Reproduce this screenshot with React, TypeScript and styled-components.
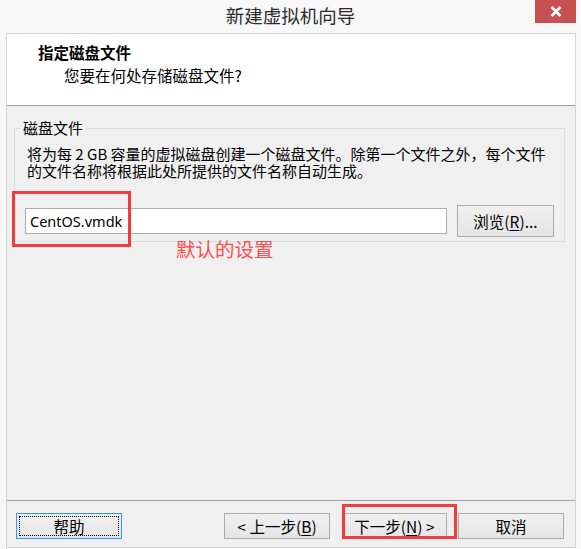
import React from 'react'
import styled, { createGlobalStyle } from 'styled-components'

const GlobalStyle = createGlobalStyle`
  html, body {
    margin: 0;
    padding: 0;
    background: #f8f8f8;
  }
  body {
    font-family: "Noto Sans", "Noto Sans CJK SC", sans-serif;
    color: #000;
  }
`

const CJK = `"Noto Sans CJK SC", "Noto Sans", sans-serif`

/**
 * The "new virtual machine" wizard, disk file step.
 */
export default function App() {
  return (
    <>
      <GlobalStyle />
      <Frame>
        <TitleBar>
          <Title>新建虚拟机向导</Title>
          <CloseButton aria-label="关闭">
            <svg width="12" height="11" viewBox="0 0 12 11">
              <path d="M1.5 1 L10.5 10 M10.5 1 L1.5 10" stroke="#fff" strokeWidth="2.6" />
            </svg>
          </CloseButton>
        </TitleBar>

        <Client>
          <Header>
            <HeaderTitle>指定磁盘文件</HeaderTitle>
            <HeaderSub>您要在何处存储磁盘文件?</HeaderSub>
          </Header>

          <Body>
            <Group>
              <Legend>磁盘文件</Legend>
              <Description>
                <Line>将为每 2 GB 容量的虚拟磁盘创建一个磁盘文件。除第一个文件之外，每个文件</Line>
                <Line>的文件名称将根据此处所提供的文件名称自动生成。</Line>
              </Description>
              <FileRow>
                <FileInput defaultValue="CentOS.vmdk" readOnly />
                <BrowseButton>
                  浏览(<u>R</u>)...
                </BrowseButton>
              </FileRow>
            </Group>

            <Highlight $left={5} $top={85} $width={119} $height={56} />
            <Note>默认的设置</Note>
          </Body>

          <Footer>
            <Button $focused $width={106}>帮助</Button>
            <Spacer />
            <Button $width={106}>
              &lt; 上一步(<u>B</u>)
            </Button>
            <Button $width={105} $gap={12}>
              下一步(<u>N</u>) &gt;
            </Button>
            <Button $width={106} $gap={11}>取消</Button>

            <Highlight $left={335} $top={3} $width={115} $height={35} />
          </Footer>
        </Client>
      </Frame>
    </>
  )
}

const Frame = styled.div`
  width: 581px;
  height: 549px;
  background: #f8f8f8;
  display: flex;
  flex-direction: column;
  overflow: hidden;
`

const TitleBar = styled.div`
  height: 33px;
  flex: none;
  display: grid;
  grid-template-columns: 1fr auto 1fr;
  align-items: start;
`

const Title = styled.div`
  grid-column: 2;
  font-family: ${CJK};
  font-size: 18.5px;
  line-height: 31px;
  color: #2b2b2b;
`

const CloseButton = styled.div`
  grid-column: 3;
  justify-self: end;
  margin-right: 5px;
  width: 41px;
  height: 23px;
  background: #c75050;
  display: flex;
  align-items: center;
  justify-content: center;
`

const Client = styled.div`
  flex: 1;
  margin: 0 5px 1px 6px;
  border: 1px solid #d4d4d4;
  background: #f0f0f0;
  display: flex;
  flex-direction: column;
`

const Header = styled.div`
  height: 72px;
  flex: none;
  box-sizing: border-box;
  background: #fff;
  border-bottom: 1px solid #a0a0a0;
  padding: 8px 0 0 31px;
  font-family: ${CJK};
`

const HeaderTitle = styled.div`
  font-size: 15.5px;
  line-height: 20px;
  font-weight: bold;
`

const HeaderSub = styled.div`
  font-size: 15.5px;
  line-height: 20px;
  margin: 3px 0 0 26px;
`

const Body = styled.div`
  position: relative;
  flex: 1;
  padding: 13px 10px 0 7px;
`

const Group = styled.fieldset`
  margin: 0;
  min-width: 0;
  border: 1px solid #dcdcdc;
  padding: 0 10px 4px 10px;
  font-family: ${CJK};
`

const Legend = styled.legend`
  margin-left: -5px;
  padding: 0 3px;
  font-size: 15px;
  line-height: 18px;
`

const Description = styled.div`
  margin: 8px 0 0 2px;
  font-size: 15px;
  line-height: 17px;
`

const Line = styled.div`
  white-space: nowrap;
`

const FileRow = styled.div`
  margin-top: 26px;
  display: flex;
  align-items: center;
  gap: 10px;
`

const FileInput = styled.input`
  flex: 1;
  min-width: 0;
  height: 26px;
  box-sizing: border-box;
  border: 1px solid #abadb3;
  background: #fff;
  padding: 0 0 0 4px;
  margin: 0;
  font-family: "Noto Sans", sans-serif;
  font-size: 14.5px;
  color: #000;
  outline: none;
`

const ButtonBase = styled.div`
  box-sizing: border-box;
  border: 1px solid #acacac;
  background: linear-gradient(#f0f0f0, #e5e5e5);
  display: flex;
  align-items: center;
  justify-content: center;
  font-family: ${CJK};
  font-size: 15.5px;
  color: #000;
  white-space: nowrap;

  u {
    text-underline-offset: 2px;
  }
`

const BrowseButton = styled(ButtonBase)`
  width: 97px;
  height: 32px;
  flex: none;
`

const Highlight = styled.div<{ $left: number; $top: number; $width: number; $height: number }>`
  position: absolute;
  left: ${p => p.$left}px;
  top: ${p => p.$top}px;
  width: ${p => p.$width}px;
  height: ${p => p.$height}px;
  box-sizing: border-box;
  border: 3px solid #f03c3c;
  pointer-events: none;
`

const Note = styled.div`
  position: absolute;
  left: 169px;
  top: 131px;
  font-family: ${CJK};
  font-size: 19.5px;
  line-height: 24px;
  color: #ff4d4d;
`

const Footer = styled.div`
  position: relative;
  height: 47px;
  flex: none;
  box-sizing: border-box;
  border-top: 1px solid #a0a0a0;
  padding: 12px 11px 0 9px;
  display: flex;
  align-items: flex-start;
`

const Spacer = styled.div`
  flex: 1;
`

const Button = styled(ButtonBase)<{ $width: number; $gap?: number; $focused?: boolean }>`
  position: relative;
  width: ${p => p.$width}px;
  height: 26px;
  flex: none;
  margin-left: ${p => p.$gap ?? 0}px;
  border-color: ${p => (p.$focused ? '#3399ff' : '#acacac')};

  &::after {
    content: '';
    display: ${p => (p.$focused ? 'block' : 'none')};
    position: absolute;
    inset: 2px;
    border: 1px dotted #000;
  }
`
